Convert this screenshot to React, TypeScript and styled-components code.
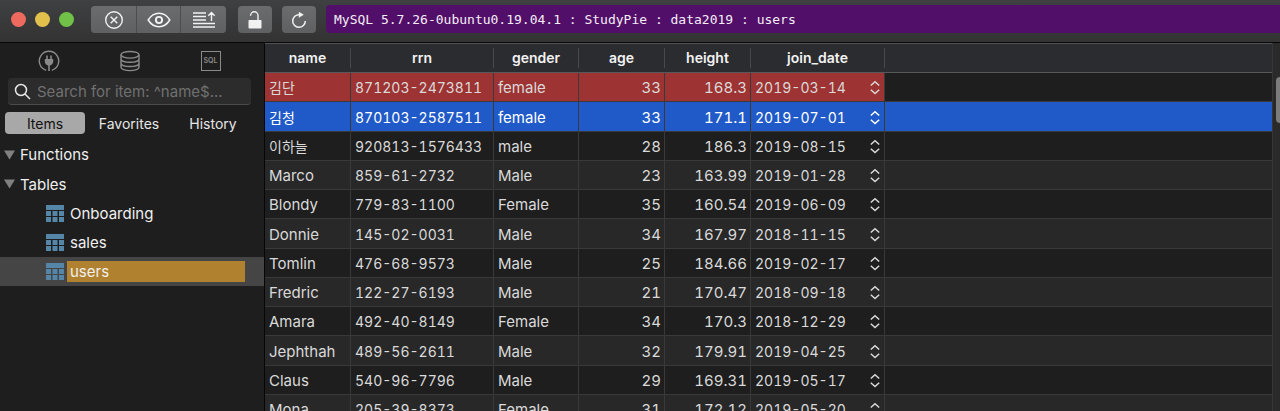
import React from "react";
import styled, { createGlobalStyle } from "styled-components";

const GlobalStyle = createGlobalStyle`
  * { box-sizing: border-box; }
  body {
    margin: 0;
    background: #1e1e1e;
    color: #dcdcdc;
    font-family: Inter, "Noto Sans CJK KR", sans-serif;
    font-size: 15px;
    line-height: 20px;
  }
  button, input { font: inherit; color: inherit; border: 0; padding: 0; margin: 0; background: none; }
  svg { display: block; }
`;

const Window = styled.div`
  display: flex;
  flex-direction: column;
  height: 100vh;
  overflow: hidden;
`;

const Toolbar = styled.header`
  display: flex;
  align-items: flex-start;
  flex: none;
  height: 43px;
  padding-top: 6px;
  background: linear-gradient(#3f4041, #333334);
  border-bottom: 1px solid #070707;
`;

const Lights = styled.div`
  display: flex;
  gap: 9px;
  padding: 6px 17px 0 11px;
`;

const Light = styled.button<{ $color: string }>`
  width: 15px;
  height: 15px;
  border-radius: 50%;
  background: ${(p) => p.$color};
`;

const ButtonGroup = styled.div`
  display: flex;
  flex: none;
  gap: 1px;
  height: 27px;
  margin-right: 12px;
  border-radius: 4px;
  overflow: hidden;
  background: #4c4d4e;
  & + & { margin-right: 10px; }
`;

const ToolButton = styled.button<{ $width: number }>`
  display: flex;
  align-items: center;
  justify-content: center;
  width: ${(p) => p.$width}px;
  background: linear-gradient(#6b6c6d, #5f6061);
  color: #f2f2f2;
`;

const Connection = styled.div`
  flex: 1;
  min-width: 0;
  height: 28px;
  margin-top: -1px;
  padding-left: 8px;
  border-radius: 4px 0 0 4px;
  background: #520f69;
  color: #f4eef6;
  font-family: "DejaVu Sans Mono", monospace;
  font-size: 13px;
  line-height: 30px;
  white-space: nowrap;
`;

const Body = styled.div`
  display: flex;
  flex: 1;
  min-height: 0;
`;

const Sidebar = styled.aside`
  flex: none;
  width: 265px;
  border-right: 1px solid #060606;
  background: #1e1e1e;
  color: #f0f0f0;
`;

const ModeBar = styled.div`
  display: grid;
  grid-template-columns: repeat(3, 81px);
  padding: 7px 0 6px 8px;
`;

const ModeButton = styled.button`
  display: flex;
  align-items: center;
  justify-content: center;
  height: 22px;
  color: #8a8a8a;
`;

const SearchBox = styled.label`
  display: flex;
  align-items: center;
  gap: 6px;
  height: 27px;
  margin: 0 13px 0 8px;
  padding: 1px 0 0 6px;
  border-radius: 4px;
  background: #2c2c2c;
  border-bottom: 1px solid #4b4b4b;
`;

const SearchInput = styled.input`
  flex: 1;
  min-width: 0;
  outline: 0;
  font-size: 15px;
  &::placeholder { color: #707070; opacity: 1; }
`;

const Tabs = styled.div`
  display: grid;
  grid-template-columns: 80px 88px 80px;
  margin: 7px 0 6px 5px;
`;

const Tab = styled.button<{ $active?: boolean }>`
  height: 22px;
  padding-top: 2px;
  border-radius: 4px;
  font-size: 14px;
  background: ${(p) => (p.$active ? "#a8a8a8" : "transparent")};
  color: ${(p) => (p.$active ? "#111" : "#e6e6e6")};
`;

const Tree = styled.ul`
  margin: 0;
  padding: 0;
  list-style: none;
`;

const TreeRow = styled.li<{ $child?: boolean; $selected?: boolean }>`
  display: flex;
  align-items: center;
  height: 29px;
  padding: ${(p) => (p.$child ? "0 19px 0 46px" : "0 0 0 4px")};
  gap: ${(p) => (p.$child ? 3 : 5)}px;
  background: ${(p) => (p.$selected ? "#454545" : "transparent")};
  &:nth-child(4n + 2) { height: 30px; }
`;

const TreeLabel = styled.span<{ $marked?: boolean }>`
  flex: 1;
  padding-left: ${(p) => (p.$marked === undefined ? 0 : 3)}px;
  line-height: 21px;
  background: ${(p) => (p.$marked ? "#b0812e" : "transparent")};
`;

const Content = styled.main`
  flex: 1;
  min-width: 0;
  overflow: hidden;
`;

const Grid = styled.table`
  width: 100%;
  table-layout: fixed;
  border-collapse: separate;
  border-spacing: 0;
  font-variant-numeric: tabular-nums;
`;

const Head = styled.th`
  height: 30px;
  padding: 0;
  border-top: 1px solid #505155;
  border-bottom: 1px solid #57585a;
  background: #2b2c2f;
  color: #f2f2f2;
  font-size: 14px;
  font-weight: 600;
`;

const HeadLabel = styled.div`
  border-right: 1px solid #48494c;
`;

type Tone = "error" | "selected" | undefined;
type Kind = "text" | "number" | "code";

const Row = styled.tr<{ $tone: Tone }>`
  height: 29px;
  background: #1e1e1e;
  color: #dadada;
  &:nth-child(even) { background: #282828; }
  &:nth-child(4n + 2) { height: 30px; }
  && {
    ${(p) => p.$tone === "selected" && "background: #205ac8; color: #fff;"}
  }
`;

const Cell = styled.td<{ $tone?: Tone; $kind?: Kind }>`
  padding: 2px 3px 0 4px;
  border-right: 1px solid #393939;
  border-bottom: 1px solid #393939;
  text-align: ${(p) => (p.$kind === "number" ? "right" : "left")};
  font-size: ${(p) => (p.$kind === "code" ? 14 : 15)}px;
  white-space: nowrap;
  ${(p) => p.$tone === "error" && "background: #9d3332;"}
  &:last-child { border-right: 0; }
  &:lang(ko) { font-size: 14px; }
`;

const DateValue = styled.div`
  display: flex;
  align-items: center;
  justify-content: space-between;
`;

const Stepper = styled.button`
  width: 12px;
  height: 16px;
`;

const ScrollTrack = styled.div`
  flex: none;
  width: 8px;
  padding: 34px 0 0 3px;
  background: #2a2a2b;
  border-left: 1px solid #363636;
  overflow: hidden;
`;

const ScrollThumb = styled.div`
  height: 46px;
  border-radius: 4px 0 0 4px;
  background: #7c7c7c;
`;

const CloseIcon = () => (
  <svg width="20" height="20" viewBox="0 0 20 20" fill="none" stroke="currentColor" strokeWidth="1.4">
    <circle cx="10" cy="10" r="8.3" />
    <path d="M6.7 6.7l6.6 6.6M13.3 6.7l-6.6 6.6" />
  </svg>
);
const EyeIcon = () => (
  <svg width="24" height="18" viewBox="0 0 24 18" fill="none" stroke="currentColor" strokeWidth="1.5">
    <path d="M1.2 9C4 4.5 7.7 2.3 12 2.3S20 4.5 22.8 9C20 13.5 16.3 15.7 12 15.7S4 13.5 1.2 9z" />
    <circle cx="12" cy="9" r="3.1" strokeWidth="1.9" />
  </svg>
);
const LinesIcon = () => (
  <svg width="24" height="18" viewBox="0 0 24 18" fill="none" stroke="currentColor" strokeWidth="1.4">
    <path d="M1 2h13M1 5.5h13M1 9h13M1 12.5h22M1 16h22M19.5 10V1.5M16.3 4.7l3.2-3.2 3.2 3.2" />
  </svg>
);
const LockIcon = () => (
  <svg width="16" height="18" viewBox="0 0 16 18" fill="none" stroke="currentColor" strokeWidth="1.4">
    <path d="M3.6 4.8V4.5a3.7 3.7 0 0 1 7.4 0V9" />
    <rect x="1.5" y="9" width="13" height="8.5" rx="0.8" fill="currentColor" stroke="none" />
  </svg>
);
const ReloadIcon = () => (
  <svg width="18" height="18" viewBox="0 0 18 18" fill="none" stroke="currentColor" strokeWidth="1.5">
    <path d="M9.5 3.7A6.3 6.3 0 1 0 15.3 10" />
    <path d="M8.8 0.7l5 3-5 3.1z" fill="currentColor" stroke="none" />
  </svg>
);
const PlugIcon = () => (
  <svg width="22" height="22" viewBox="0 0 22 22" fill="none" stroke="currentColor" strokeWidth="1.4">
    <path d="M8.2 20.3A9.7 9.7 0 1 1 13.8 20.3" />
    <path d="M9 5.5v4M13 5.5v4M11 14v7" strokeWidth="1.6" />
    <path d="M6.8 9h8.4v2.5c0 2.2-1.5 4-4.2 4s-4.2-1.8-4.2-4z" fill="currentColor" stroke="none" />
  </svg>
);
const DatabaseIcon = () => (
  <svg width="22" height="22" viewBox="0 0 22 22" fill="none" stroke="currentColor" strokeWidth="1.4">
    <ellipse cx="11" cy="4.8" rx="9" ry="3.3" />
    <path d="M2 4.8v12.4c0 1.9 4 3.4 9 3.4s9-1.5 9-3.4V4.8M2 9c0 1.9 4 3.3 9 3.3S20 10.9 20 9M2 13.2c0 1.9 4 3.3 9 3.3s9-1.4 9-3.3" />
  </svg>
);
const SqlBadge = styled.span`
  display: flex;
  align-items: center;
  justify-content: center;
  width: 20px;
  height: 20px;
  border: 1px solid #8a8a8a;
  font-size: 7px;
  line-height: 8px;
  font-weight: 600;
`;
const SearchIcon = () => (
  <svg width="17" height="17" viewBox="0 0 17 17" fill="none" stroke="#e8e8e8" strokeWidth="1.5">
    <circle cx="7" cy="7" r="5.5" />
    <path d="M11 11l5 5" />
  </svg>
);
const Triangle = () => (
  <svg width="11" height="10" viewBox="0 0 11 10">
    <path d="M0 0.5h11L5.5 9.5z" fill="#808080" />
  </svg>
);
const TableIcon = () => (
  <svg width="18" height="18" viewBox="0 0 18 18" fill="#5586a8">
    <rect width="18" height="5" />
    {[6, 12].map((y) =>
      [0, 6.5, 13].map((x) => <rect key={`${x}-${y}`} x={x} y={y} width="5" height="5" />)
    )}
  </svg>
);
const StepIcon = () => (
  <svg width="12" height="16" viewBox="0 0 12 16" fill="none" stroke="currentColor" strokeWidth="1.5">
    <path d="M1.8 5.5L6 1.7 10.2 5.5M1.8 9.7L6 13.5l4.2-3.8" />
  </svg>
);

const columns: { name: string; width: number; kind: Kind }[] = [
  { name: "name", width: 86, kind: "text" },
  { name: "rrn", width: 143, kind: "code" },
  { name: "gender", width: 85, kind: "text" },
  { name: "age", width: 86, kind: "number" },
  { name: "height", width: 86, kind: "number" },
  { name: "join_date", width: 134, kind: "code" },
];

const users = [
  ["김단", "871203-2473811", "female", "33", "168.3", "2019-03-14"],
  ["김청", "870103-2587511", "female", "33", "171.1", "2019-07-01"],
  ["이하늘", "920813-1576433", "male", "28", "186.3", "2019-08-15"],
  ["Marco", "859-61-2732", "Male", "23", "163.99", "2019-01-28"],
  ["Blondy", "779-83-1100", "Female", "35", "160.54", "2019-06-09"],
  ["Donnie", "145-02-0031", "Male", "34", "167.97", "2018-11-15"],
  ["Tomlin", "476-68-9573", "Male", "25", "184.66", "2019-02-17"],
  ["Fredric", "122-27-6193", "Male", "21", "170.47", "2018-09-18"],
  ["Amara", "492-40-8149", "Female", "34", "170.3", "2018-12-29"],
  ["Jephthah", "489-56-2611", "Male", "32", "179.91", "2019-04-25"],
  ["Claus", "540-96-7796", "Male", "29", "169.31", "2019-05-17"],
  ["Mona", "205-39-8373", "Female", "31", "172.12", "2019-05-20"],
];

const tones: Tone[] = ["error", "selected"];

const langOf = (value: string) => (/[가-힣]/.test(value) ? "ko" : undefined);

export default function App() {
  return (
    <Window>
      <GlobalStyle />
      <Toolbar>
        <Lights>
          <Light $color="#ee6a5f" aria-label="Close" />
          <Light $color="#e1c04c" aria-label="Minimize" />
          <Light $color="#71c047" aria-label="Zoom" />
        </Lights>
        <ButtonGroup>
          <ToolButton $width={45} aria-label="Cancel"><CloseIcon /></ToolButton>
          <ToolButton $width={43} aria-label="Preview"><EyeIcon /></ToolButton>
          <ToolButton $width={45} aria-label="Commit"><LinesIcon /></ToolButton>
        </ButtonGroup>
        <ButtonGroup>
          <ToolButton $width={34} aria-label="Unlock"><LockIcon /></ToolButton>
        </ButtonGroup>
        <ButtonGroup>
          <ToolButton $width={34} aria-label="Reload"><ReloadIcon /></ToolButton>
        </ButtonGroup>
        <Connection>MySQL 5.7.26-0ubuntu0.19.04.1 : StudyPie : data2019 : users</Connection>
      </Toolbar>
      <Body>
        <Sidebar>
          <ModeBar>
            <ModeButton aria-label="Connections"><PlugIcon /></ModeButton>
            <ModeButton aria-label="Databases"><DatabaseIcon /></ModeButton>
            <ModeButton><SqlBadge>SQL</SqlBadge></ModeButton>
          </ModeBar>
          <SearchBox>
            <SearchIcon />
            <SearchInput aria-label="Search for item" placeholder="Search for item: ^name$..." />
          </SearchBox>
          <Tabs>
            <Tab $active>Items</Tab>
            <Tab>Favorites</Tab>
            <Tab>History</Tab>
          </Tabs>
          <Tree>
            <TreeRow><Triangle /><TreeLabel>Functions</TreeLabel></TreeRow>
            <TreeRow><Triangle /><TreeLabel>Tables</TreeLabel></TreeRow>
            {["Onboarding", "sales", "users"].map((t) => (
              <TreeRow key={t} $child $selected={t === "users"}>
                <TableIcon />
                <TreeLabel $marked={t === "users"}>{t}</TreeLabel>
              </TreeRow>
            ))}
          </Tree>
        </Sidebar>
        <Content>
          <Grid>
            <colgroup>
              {columns.map((c) => <col key={c.name} width={c.width} />)}
              <col />
            </colgroup>
            <thead>
              <tr>
                {columns.map((c) => (
                  <Head key={c.name} scope="col"><HeadLabel>{c.name}</HeadLabel></Head>
                ))}
                <Head as="td" />
              </tr>
            </thead>
            <tbody>
              {users.map((u, i) => (
                <Row key={u[1]} $tone={tones[i]}>
                  {u.map((value, c) => (
                    <Cell key={c} lang={langOf(value)} $tone={tones[i]} $kind={columns[c].kind}>
                      {columns[c].name === "join_date" ? (
                        <DateValue>
                          {value}
                          <Stepper aria-label="Choose date"><StepIcon /></Stepper>
                        </DateValue>
                      ) : value}
                    </Cell>
                  ))}
                  <Cell />
                </Row>
              ))}
            </tbody>
          </Grid>
        </Content>
        <ScrollTrack><ScrollThumb /></ScrollTrack>
      </Body>
    </Window>
  );
}
